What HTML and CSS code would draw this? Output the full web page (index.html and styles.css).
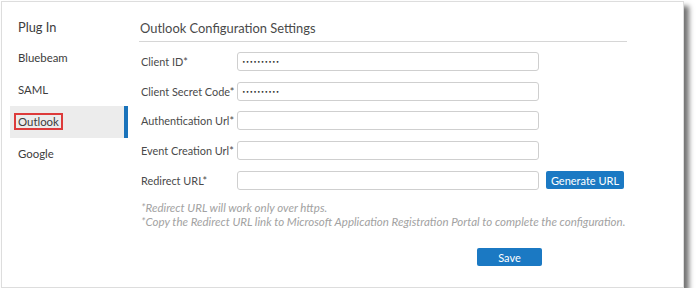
FILE: index.html
```html
<!DOCTYPE html>
<html lang="en">
    <head>
        <meta charset="UTF-8">
        <title>Plug In - Outlook</title>
        <link rel="stylesheet" href="styles.css">
    </head>
    <body>
        <div class="frame">
            <div class="side">
                <div class="side-title">Plug In</div>
                <div class="item">Bluebeam</div>
                <div class="item">SAML</div>
                <div class="item active"><span class="mark">Outlook</span></div>
                <div class="item">Google</div>
            </div>
            <div class="main">
                <h1 class="title">Outlook Configuration Settings</h1>
                <div class="form">
                    <div class="row">
                        <label for="clientId">Client ID*</label>
                        <input type="password" id="clientId" class="field secret" value="xxxxxxxxxx"/>
                    </div>
                    <div class="row">
                        <label for="clientSecret">Client Secret Code*</label>
                        <input type="password" id="clientSecret" class="field secret" value="xxxxxxxxxx"/>
                    </div>
                    <div class="row">
                        <label for="authUrl">Authentication Url*</label>
                        <input type="text" id="authUrl" class="field"/>
                    </div>
                    <div class="row">
                        <label for="eventUrl">Event Creation Url*</label>
                        <input type="text" id="eventUrl" class="field"/>
                    </div>
                    <div class="row">
                        <label for="redirectUrl">Redirect URL*</label>
                        <input type="text" id="redirectUrl" class="field"/>
                        <button type="button" class="btn gen">Generate URL</button>
                    </div>
                </div>
                <p class="note">*Redirect URL will work only over https.<br>*Copy the Redirect URL link to Microsoft Application Registration Portal to complete the configuration.</p>
                <div class="actions">
                    <button type="button" class="btn save">Save</button>
                </div>
            </div>
        </div>
    </body>
</html>
```

FILE: styles.css
```css
body {
    margin: 0;
    background-color: #fff;
    font-family: "Lato", "Open Sans", sans-serif;
    color: #3c3c3c;
}
.frame {
    display: flex;
    margin: 1px 0 0 1px;
    width: 681px;
    height: 285px;
    border: 1px solid #ddd;
    background-color: #fff;
    box-shadow: 5px 5px 5px rgba(0, 0, 0, 0.55);
}
.side {
    width: 118px;
    flex-shrink: 0;
    padding-left: 8px;
}
.side-title {
    height: 40px;
    padding-left: 8px;
    font-size: 12.8px;
    line-height: 16px;
    padding-top: 17px;
    box-sizing: border-box;
}
.item {
    height: 32px;
    line-height: 32px;
    padding-left: 8px;
    font-size: 11.4px;
    box-sizing: border-box;
}
.item.active {
    background-color: #ececec;
    border-right: 4px solid #1a73bb;
}
.mark {
    display: inline-block;
    line-height: 13px;
    margin-left: -4px;
    padding: 0 2px 0 2px;
    border: 2px solid #dd3b3b;
}
.main {
    width: 488px;
    flex-shrink: 0;
    padding-left: 11px;
}
.title {
    margin: 0;
    height: 40px;
    padding: 17px 0 0 1px;
    box-sizing: border-box;
    font-size: 12.9px;
    font-weight: normal;
    line-height: 18px;
    color: #4a4a4a;
    border-bottom: 1px solid #d6d6d6;
}
.form {
    display: flex;
    flex-direction: column;
    gap: 10.7px;
    padding-top: 10px;
}
.row {
    display: flex;
    align-items: center;
    height: 19px;
}
.row label {
    width: 96px;
    flex-shrink: 0;
    padding-left: 2px;
    font-size: 10.9px;
    white-space: nowrap;
    color: #4a4a4a;
}
.field {
    width: 302px;
    flex-shrink: 0;
    height: 19px;
    box-sizing: border-box;
    border: 1px solid #cfcfcf;
    border-radius: 3px;
    padding: 0 4px;
    font-family: "DejaVu Sans", sans-serif;
    font-size: 11px;
    color: #222;
}
.secret {
    font-size: 6px;
    letter-spacing: 0.2px;
}
.btn {
    background-color: #1b79c3;
    color: #fff;
    border: none;
    border-radius: 2px;
    font-family: "Lato", "Open Sans", sans-serif;
    font-size: 11px;
    padding: 0;
    height: 18px;
}
.gen {
    width: 78px;
    flex-shrink: 0;
    margin-left: 7px;
}
.note {
    margin: 11px 0 0 2px;
    font-size: 11.5px;
    font-style: italic;
    line-height: 14px;
    color: #a2a2a2;
    white-space: nowrap;
}
.actions {
    padding: 17px 0 0 338px;
}
.save {
    width: 65px;
}
```
